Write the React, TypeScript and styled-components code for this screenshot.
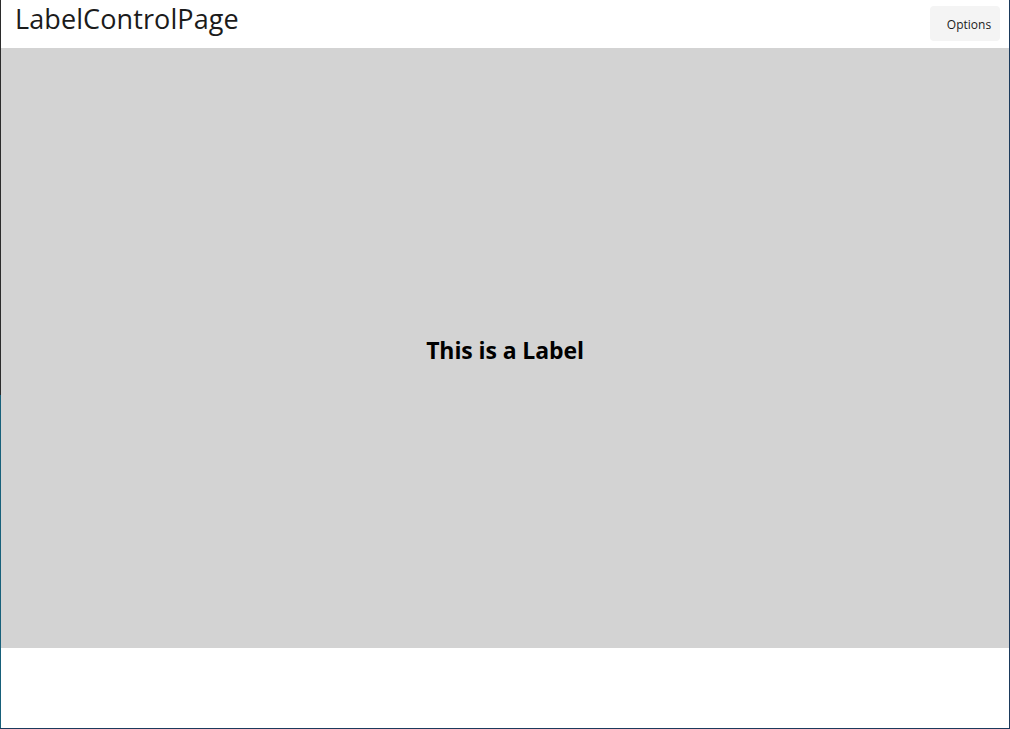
import React from 'react';
import styled, { createGlobalStyle } from 'styled-components';

const GlobalStyle = createGlobalStyle`
  html, body {
    margin: 0;
    padding: 0;
    background: #ffffff;
  }
  body {
    font-family: "Open Sans", "Noto Sans", sans-serif;
  }
`;

const Window = styled.div`
  width: 1010px;
  height: 729px;
  box-sizing: border-box;
  display: flex;
  flex-direction: column;
  border-right: 1px solid #1b3a5c;
  border-bottom: 1px solid #1b3a5c;
  position: relative;
  background: #ffffff;
`;

// left edge: dark on top, teal below
const LeftEdge = styled.div`
  position: absolute;
  left: 0;
  top: 0;
  bottom: 0;
  width: 1px;
  background: linear-gradient(to bottom, #2b2b2b 0, #2b2b2b 395px, #17607a 395px, #17607a 100%);
`;

const TitleBar = styled.div`
  height: 48px;
  display: flex;
  align-items: flex-start;
  justify-content: space-between;
  padding: 0 9px 0 15px;
  flex-shrink: 0;
`;

const Title = styled.h1`
  margin: 2px 0 0;
  font-family: "Open Sans", "Noto Sans", sans-serif;
  font-weight: 400;
  font-size: 27px;
  line-height: 34px;
  letter-spacing: 0.1px;
  color: #1b1b1b;
`;

const OptionsButton = styled.button`
  margin-top: 6px;
  width: 70px;
  height: 35px;
  border: none;
  border-radius: 4px;
  background: #f4f4f4;
  font-family: "Open Sans", "Noto Sans", sans-serif;
  font-size: 12px;
  color: #1b1b1b;
  padding: 2px 0 0 8px;
  cursor: pointer;
`;

const Content = styled.div`
  height: 600px;
  margin-left: 1px;
  background: #d3d3d3;
  display: flex;
  align-items: center;
  justify-content: center;
`;

const Label = styled.span`
  font-family: "Open Sans", "Noto Sans", sans-serif;
  font-weight: 700;
  font-size: 23px;
  color: #000000;
  margin-top: 3px;
  letter-spacing: -0.1px;
`;

export default function App() {
  return (
    <>
      <GlobalStyle />
      <Window>
        <LeftEdge />
        <TitleBar>
          <Title>LabelControlPage</Title>
          <OptionsButton>Options</OptionsButton>
        </TitleBar>
        <Content>
          <Label>This is a Label</Label>
        </Content>
      </Window>
    </>
  );
}
